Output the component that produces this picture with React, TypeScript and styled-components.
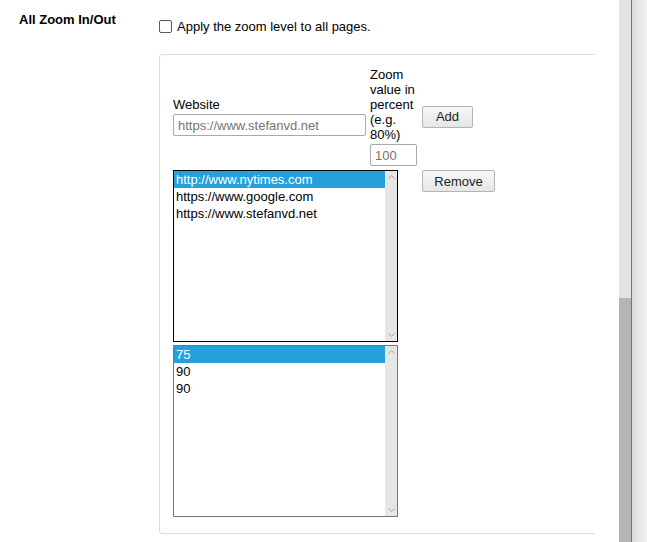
import { FC } from 'react'
import styled, { createGlobalStyle } from 'styled-components'

const GlobalStyle = createGlobalStyle`
    html, body {
        margin: 0;
        padding: 0;
        background: #fff;
        overflow: hidden;
    }
    body {
        font-family: "Liberation Sans", Arial, sans-serif;
        font-size: 13px;
        color: #000;
    }
`

const Window = styled.div`
    display: flex;
    flex-direction: row;
    width: 647px;
    height: 542px;
    overflow: hidden;
`
const Page = styled.div`
    width: 619px;
    height: 100%;
    background: #fff;
    overflow: hidden;
`
const ScrollBar = styled.div`
    display: flex;
    flex-direction: column;
    width: 12px;
    height: 100%;
    background: #e3e3e3;
`
const ScrollThumb = styled.div`
    margin-top: 298px;
    flex: 1;
    background: #b4b4b4;
`
const Edge = styled.div`
    width: 1px;
    background: #4a7fbf;
`
const Shade = styled.div`
    flex: 1;
    background: linear-gradient(to right, #d9d9d9, #f3f3f3);
`
const Section = styled.div`
    display: flex;
    flex-direction: row;
    padding: 12px 0 0 19px;
`
const Title = styled.div`
    width: 140px;
    flex-shrink: 0;
    font-weight: bold;
    line-height: 15px;
`
const Content = styled.div`
    display: flex;
    flex-direction: column;
`
const CheckRow = styled.label`
    display: flex;
    flex-direction: row;
    align-items: center;
    gap: 5px;
    margin-top: 7px;
    height: 14px;
    line-height: 15px;
`
const Check = styled.span`
    display: inline-block;
    box-sizing: border-box;
    width: 13px;
    height: 13px;
    border: 1px solid #5b5b5b;
    border-radius: 2px;
    background: #fff;
`
const Box = styled.div`
    box-sizing: border-box;
    width: 436px;
    height: 480px;
    margin-top: 21px;
    padding: 12px 0 0 13px;
    border: 1px solid #dcdcdc;
    border-right: none;
    border-radius: 3px 0 0 3px;
`
const Grid = styled.div`
    display: grid;
    grid-template-columns: 193px 47px auto;
    column-gap: 4px;
    row-gap: 4px;
    align-items: center;
    justify-items: start;
`
const Field = styled.div<{ $width: number }>`
    display: flex;
    flex-direction: column;
    width: ${p => p.$width}px;
    line-height: 15px;
`
const Label = styled.span`
    display: block;
    margin-bottom: 2px;
`
const TextInput = styled.input`
    box-sizing: border-box;
    width: 100%;
    height: 22px;
    margin: 0;
    padding: 1px 4px;
    border: 1px solid #a9a9a9;
    border-radius: 2px;
    font-family: inherit;
    font-size: 13px;
    color: #000;
    outline: none;
    &::placeholder {
        color: #757575;
    }
`
const Button = styled.button<{ $width: number }>`
    box-sizing: border-box;
    width: ${p => p.$width}px;
    height: 22px;
    margin-left: 1px;
    padding: 0;
    border: 1px solid #b4b4b4;
    border-radius: 2px;
    background: linear-gradient(#f7f7f7, #e6e6e6);
    font-family: inherit;
    font-size: 13px;
    color: #222;
`
const Lists = styled.div`
    grid-column: 1 / 3;
    display: flex;
    flex-direction: column;
    gap: 3px;
    align-self: start;
`
const ListBox = styled.div<{ $focused?: boolean }>`
    box-sizing: border-box;
    display: flex;
    flex-direction: row;
    width: 225px;
    height: 172px;
    border: 1px solid ${p => (p.$focused ? '#000' : '#767676')};
    background: #fff;
`
const Options = styled.div`
    flex: 1;
    display: flex;
    flex-direction: column;
`
const Option = styled.div<{ $selected?: boolean }>`
    height: 17px;
    padding: 0 2px;
    line-height: 17px;
    white-space: nowrap;
    background: ${p => (p.$selected ? '#26a0da' : 'transparent')};
    color: ${p => (p.$selected ? '#fff' : '#000')};
`
const Track = styled.div`
    width: 12px;
    display: flex;
    flex-direction: column;
    justify-content: space-between;
    align-items: center;
    padding: 4px 0;
    background: #e6e6e6;
`
const TopButton = styled(Button)`
    align-self: start;
`

const Chevron: FC<{ up?: boolean }> = ({ up }) => (
    <svg width="7" height="4" viewBox="0 0 7 4">
        <polyline
            points={up ? '0.5,3.5 3.5,0.5 6.5,3.5' : '0.5,0.5 3.5,3.5 6.5,0.5'}
            fill="none"
            stroke="#a3a3a3"
            strokeWidth="1"
        />
    </svg>
)

const List: FC<{ items: string[]; focused?: boolean }> = ({ items, focused }) => (
    <ListBox $focused={focused}>
        <Options>
            {items.map((item, i) => (
                <Option key={i} $selected={i === 0}>
                    {item}
                </Option>
            ))}
        </Options>
        <Track>
            <Chevron up />
            <Chevron />
        </Track>
    </ListBox>
)

const sites = ['http://www.nytimes.com', 'https://www.google.com', 'https://www.stefanvd.net']
const values = ['75', '90', '90']

const App: FC = () => {
    return (
        <Window>
            <GlobalStyle />
            <Page>
                <Section>
                    <Title>All Zoom In/Out</Title>
                    <Content>
                        <CheckRow>
                            <Check />
                            Apply the zoom level to all pages.
                        </CheckRow>
                        <Box>
                            <Grid>
                                <Field $width={193}>
                                    <Label>Website</Label>
                                    <TextInput placeholder="https://www.stefanvd.net" />
                                </Field>
                                <Field $width={47}>
                                    <Label>Zoom value in percent (e.g. 80%)</Label>
                                    <TextInput placeholder="100" />
                                </Field>
                                <Button $width={51}>Add</Button>
                                <Lists>
                                    <List items={sites} focused />
                                    <List items={values} />
                                </Lists>
                                <TopButton $width={73}>Remove</TopButton>
                            </Grid>
                        </Box>
                    </Content>
                </Section>
            </Page>
            <ScrollBar>
                <ScrollThumb />
            </ScrollBar>
            <Edge />
            <Shade />
        </Window>
    )
}

export default App
